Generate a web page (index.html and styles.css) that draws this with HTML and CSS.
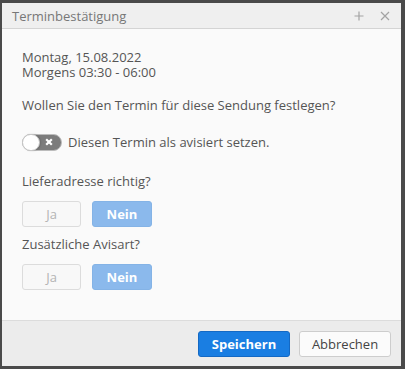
FILE: index.html
```html
<!DOCTYPE html>
<html lang="de">
<head>
  <meta charset="UTF-8">
  <title>Terminbestätigung</title>
  <link rel="stylesheet" href="styles.css">
</head>
<body>

<div class="dialog">
  <div class="dialog-header">
    <span class="dialog-title">Terminbestätigung</span>
    <span class="header-tools">
      <svg class="tool" width="10" height="10" viewBox="0 0 10 10"><path d="M5 0.5V9.5M0.5 5H9.5" stroke="#a3a3a3" stroke-width="1.2" fill="none"/></svg>
      <svg class="tool" width="10" height="10" viewBox="0 0 10 10"><path d="M1 1L9 9M9 1L1 9" stroke="#a3a3a3" stroke-width="1.2" fill="none"/></svg>
    </span>
  </div>

  <div class="dialog-body">
    <div class="date">Montag, 15.08.2022</div>
    <div class="date">Morgens 03:30 - 06:00</div>
    <p class="question">Wollen Sie den Termin für diese Sendung festlegen?</p>

    <div class="toggle-row">
      <span class="toggle">
        <span class="knob"></span>
        <svg class="toggle-x" width="8" height="8" viewBox="0 0 8 8"><path d="M1.2 1.2L6.8 6.8M6.8 1.2L1.2 6.8" stroke="#fff" stroke-width="2.2" fill="none"/></svg>
      </span>
      <span>Diesen Termin als avisiert setzen.</span>
    </div>

    <div class="field-label first">Lieferadresse richtig?</div>
    <div class="choice">
      <button class="btn-ja">Ja</button>
      <button class="btn-nein">Nein</button>
    </div>

    <div class="field-label">Zusätzliche Avisart?</div>
    <div class="choice">
      <button class="btn-ja">Ja</button>
      <button class="btn-nein">Nein</button>
    </div>
  </div>

  <div class="dialog-footer">
    <button class="btn-save">Speichern</button>
    <button class="btn-cancel">Abbrechen</button>
  </div>
</div>

</body>
</html>
```

FILE: styles.css
```css
body {
  margin: 0;
  background: #4a4a4a;
  font-family: 'Open Sans', Arial, sans-serif;
  font-size: 13px;
  color: #555;
}
.dialog {
  margin: 3px 0 0 2px;
  width: 399px;
  height: 363px;
  display: flex;
  flex-direction: column;
  background: #fafafa;
}
.dialog-header {
  height: 25px;
  border-bottom: 1px solid #d4d4d4;
  background: #efefef;
  display: flex;
  align-items: center;
  justify-content: space-between;
  padding: 0 11px 0 10px;
}
.dialog-title {
  color: #777;
  font-size: 13px;
}
.header-tools {
  display: flex;
  gap: 16px;
  align-items: center;
}
.tool {
  display: block;
}
.dialog-body {
  flex: 1;
  padding: 21px 20px 0 20px;
}
.date {
  line-height: 15px;
}
.dialog-body p {
  margin: 0;
  line-height: 15px;
}
.question {
  margin-top: 18px !important;
}
.toggle-row {
  margin-top: 20px;
  display: flex;
  align-items: center;
  gap: 6px;
  line-height: 18px;
}
.toggle {
  position: relative;
  width: 40px;
  height: 17px;
  border-radius: 9px;
  background: #7c7c7c;
  border: 1px solid #bcbcbc;
  box-sizing: border-box;
}
.knob {
  position: absolute;
  left: -1px;
  top: -1px;
  width: 18px;
  height: 17px;
  border-radius: 9px;
  background: #fff;
  border: 1px solid #c4c4c4;
  box-sizing: border-box;
  box-shadow: 1px 0 2px rgba(0,0,0,0.15);
}
.toggle-x {
  position: absolute;
  right: 8px;
  top: 3.5px;
}
.field-label {
  margin-top: 10px;
  line-height: 15px;
}
.field-label.first {
  margin-top: 23px;
}
.choice {
  display: flex;
  gap: 11px;
  margin-top: 12px;
}
.choice button {
  width: 59px;
  height: 26px;
  border-radius: 3px;
  font-family: 'Open Sans', Arial, sans-serif;
  font-size: 13px;
  padding: 0;
}
.btn-ja {
  background: #f8f8f8;
  border: 1px solid #dcdcdc;
  color: #b4b4b4;
}
.btn-nein {
  width: 60px !important;
  background: #8bb9ec;
  border: 1px solid #84b3e6;
  color: #fff;
  font-weight: bold;
}
.dialog-footer {
  border-top: 1px solid #dcdcdc;
  background: #ececec;
  height: 46px;
  box-sizing: border-box;
  padding: 10px 10px 0 0;
  display: flex;
  justify-content: flex-end;
  gap: 9px;
}
.dialog-footer button {
  width: 92px;
  height: 26px;
  border-radius: 3px;
  font-family: 'Open Sans', Arial, sans-serif;
  font-size: 13px;
  padding: 0;
}
.btn-save {
  background: #1a7ee2;
  border: 1px solid #1469c4;
  color: #fff;
  font-weight: bold;
}
.btn-cancel {
  background: #fbfbfb;
  border: 1px solid #cdcdcd;
  color: #444;
}
```
